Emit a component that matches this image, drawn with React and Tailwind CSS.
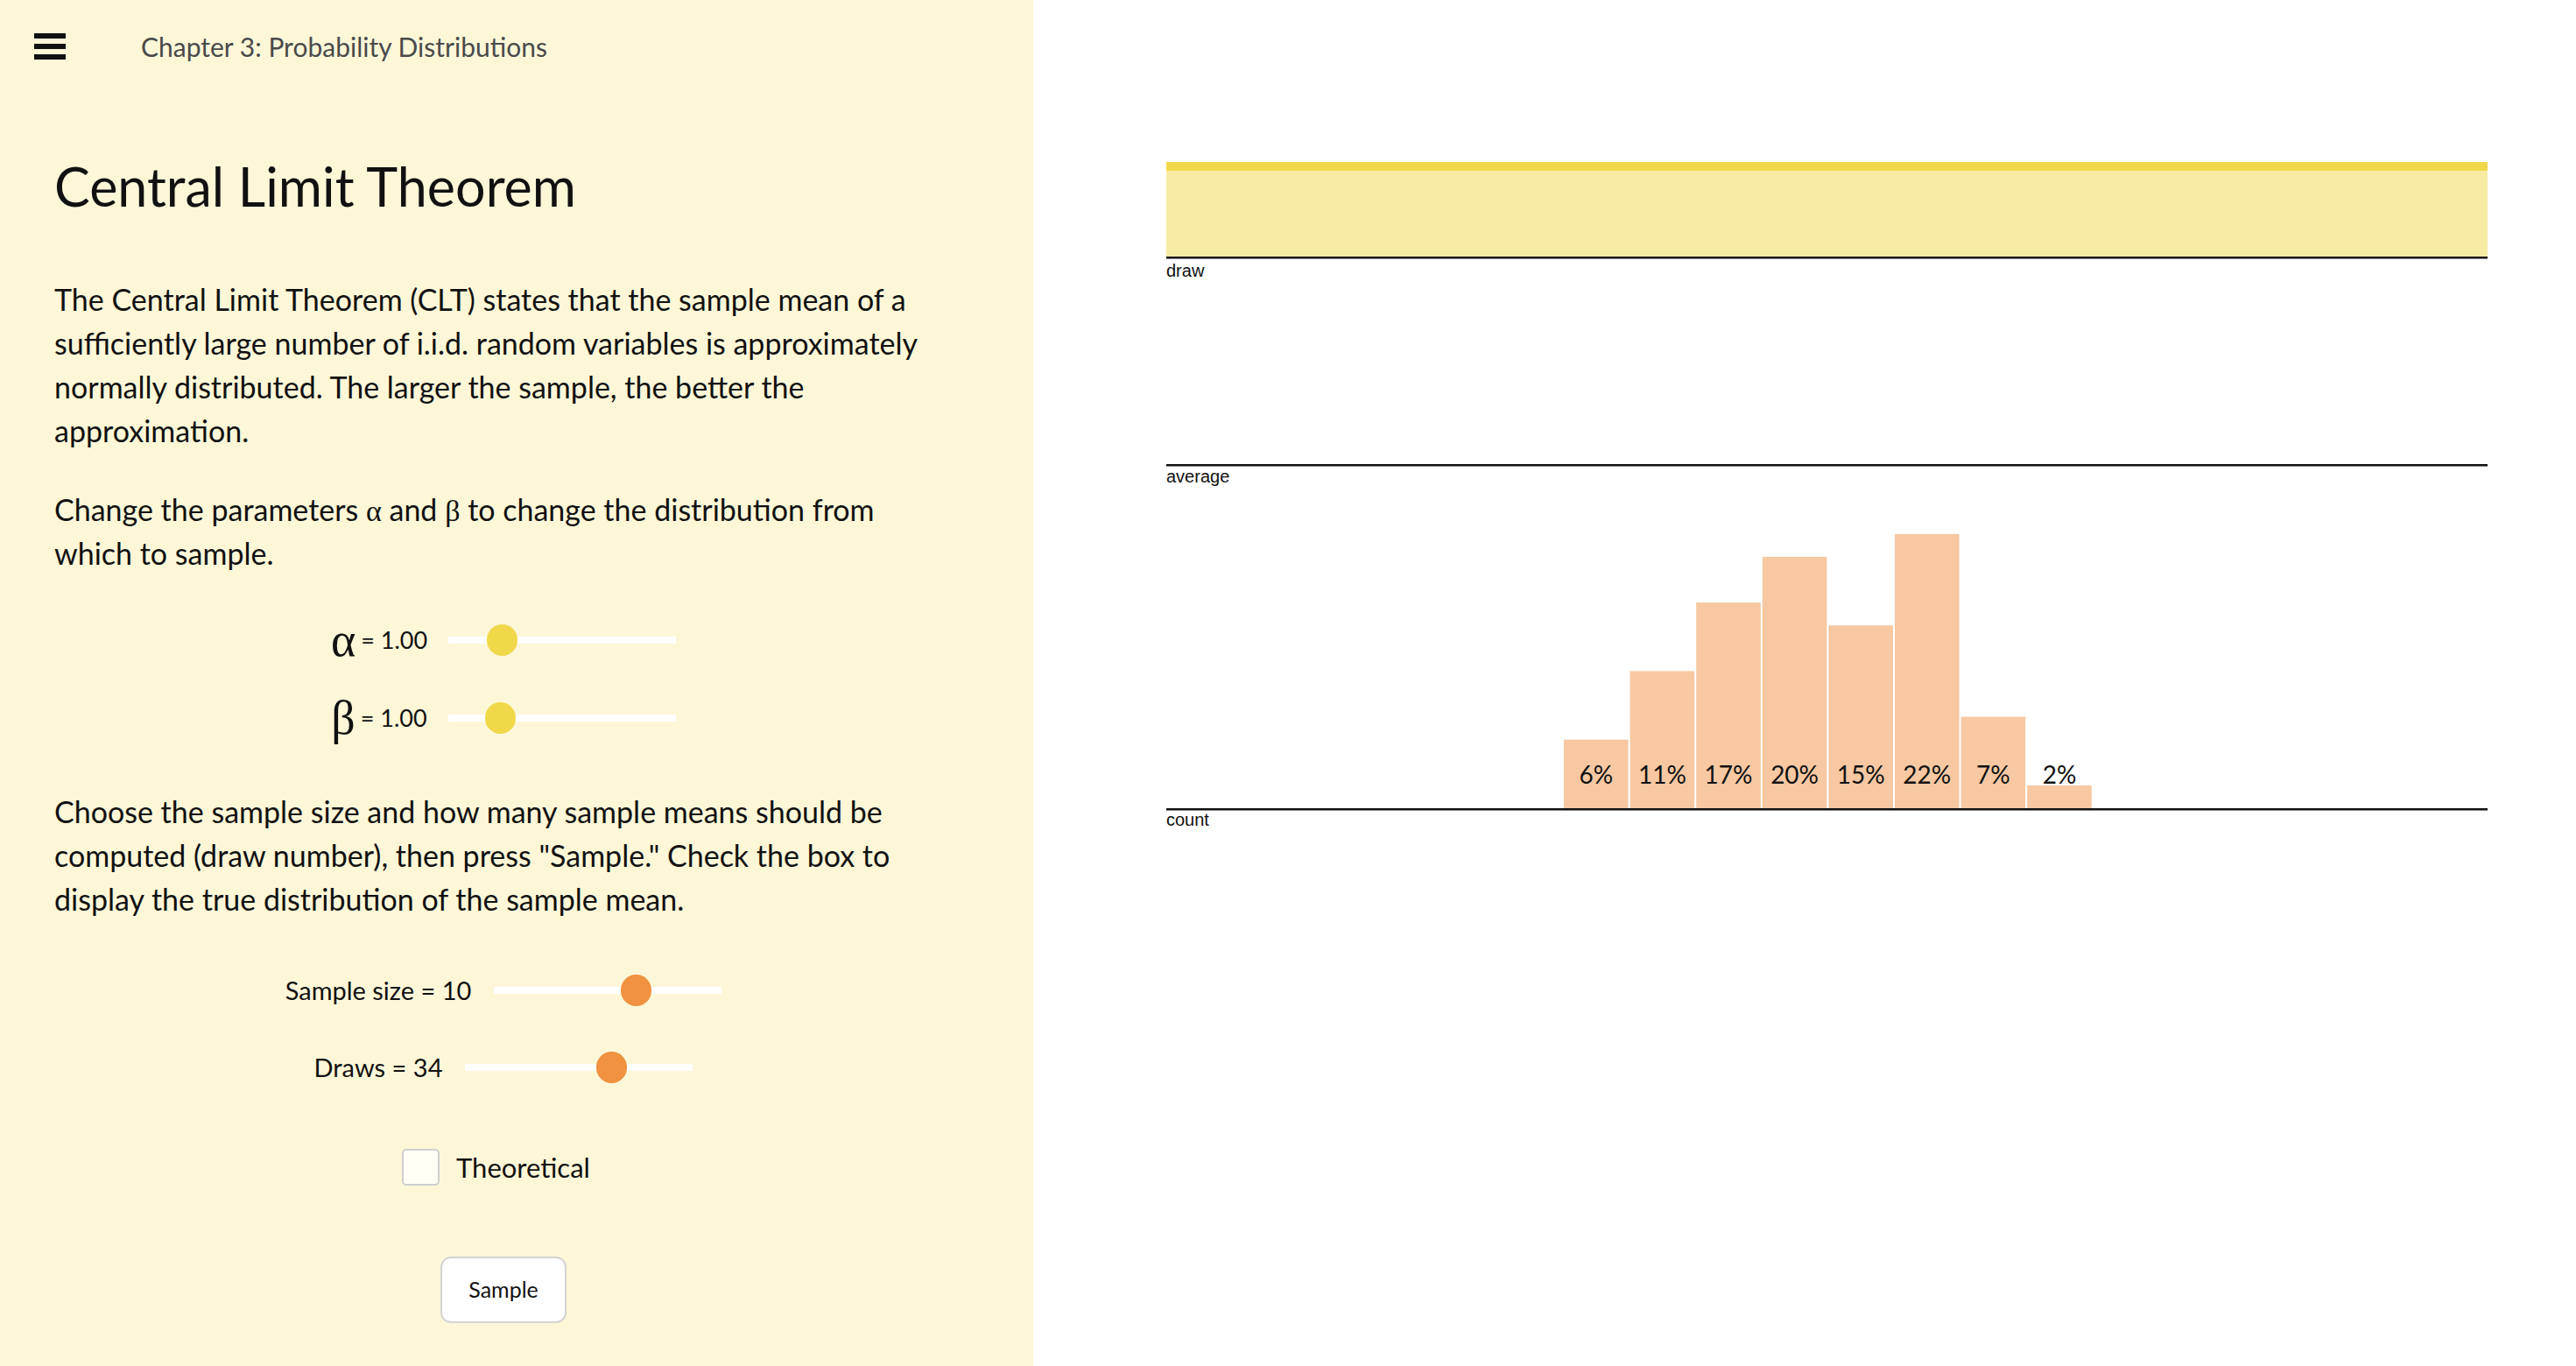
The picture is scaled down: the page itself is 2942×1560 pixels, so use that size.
import React from 'react'

const counts = [3, 6, 9, 11, 8, 12, 4, 1]
const labels = ['6%', '11%', '17%', '20%', '15%', '22%', '7%', '2%']

function Slider({ frac, thumb }) {
  return (
    <div className="relative flex h-[36px] w-[260px] items-center">
      <div className="h-[8px] w-full bg-white" />
      <div
        className={`absolute top-0 h-[36px] w-[35px] rounded-full ${thumb}`}
        style={{ left: frac * 260 - 17.5 }}
      />
    </div>
  )
}

function Chart() {
  const base = 763
  return (
    <svg width="1512" height="800" viewBox="0 0 1512 800" className="block">
      <rect x="0" y="25" width="1509" height="10" fill="#efd94a" />
      <rect x="0" y="35" width="1509" height="98" fill="#f7eba4" />
      <rect x="0" y="133" width="1509" height="2.5" fill="#111" />
      <text x="0" y="156" fontSize="20" fontFamily="Liberation Sans, Arial, sans-serif" fill="#111">draw</text>

      <rect x="0" y="370" width="1509" height="2.5" fill="#111" />
      <text x="0" y="391" fontSize="20" fontFamily="Liberation Sans, Arial, sans-serif" fill="#111">average</text>

      {counts.map((c, i) => {
        const x = 454 + i * 75.6
        return (
          <g key={i}>
            <rect x={x} y={base - c * 26.1} width="73.6" height={c * 26.1} fill="#f7c8a1" />
            <text
              x={x + 36.8}
              y="735"
              textAnchor="middle"
              fontSize="28"
              fontFamily="Lato, sans-serif"
              fill="#111"
            >
              {labels[i]}
            </text>
          </g>
        )
      })}

      <rect x="0" y={base} width="1509" height="2.5" fill="#111" />
      <text x="0" y="783" fontSize="20" fontFamily="Liberation Sans, Arial, sans-serif" fill="#111">count</text>
    </svg>
  )
}

export default function App() {
  return (
    <div className="flex h-[1560px] w-full font-[Lato,sans-serif] text-[#111]">
      {/* left: text + controls */}
      <div className="h-full w-[1180px] shrink-0 bg-[#fdf7d8]">
        <div className="flex h-[106px] items-center pl-[39px]">
          <div className="flex w-[36px] flex-col gap-[6px]">
            <div className="h-[6px] bg-[#111]" />
            <div className="h-[6px] bg-[#111]" />
            <div className="h-[6px] bg-[#111]" />
          </div>
          <span className="ml-[86px] text-[30px] text-[#4a4a4a]">Chapter 3: Probability Distributions</span>
        </div>

        <div className="pl-[62px] pr-[92px]">
          <h1 className="mt-[66px] text-[61px] leading-[81px] font-normal">Central Limit Theorem</h1>

          <p className="mt-[64px] max-w-[1010px] text-[34px] leading-[50px]">
            The Central Limit Theorem (CLT) states that the sample mean of a sufficiently large number of
            i.i.d. random variables is approximately normally distributed. The larger the sample, the better
            the approximation.
          </p>

          <p className="mt-[40px] max-w-[1010px] text-[34px] leading-[50px]">
            Change the parameters <span className="font-['Liberation_Serif',serif] leading-none">α</span> and{' '}
            <span className="font-['Liberation_Serif',serif] leading-none">β</span> to change the distribution
            from which to sample.
          </p>

          <div className="mt-[44px] flex h-[60px] items-center justify-center">
            <span className="font-['Liberation_Serif',serif] text-[54px] leading-none">α</span>
            <span className="ml-[6px] text-[27px]">= 1.00</span>
            <div className="ml-[24px]">
              <Slider frac={0.238} thumb="bg-[#f0d84a]" />
            </div>
          </div>
          <div className="mt-[29px] flex h-[60px] items-center justify-center">
            <span className="font-['Liberation_Serif',serif] text-[54px] leading-none">β</span>
            <span className="ml-[6px] text-[27px]">= 1.00</span>
            <div className="ml-[24px]">
              <Slider frac={0.23} thumb="bg-[#f0d84a]" />
            </div>
          </div>

          <p className="mt-[52px] max-w-[1010px] text-[34px] leading-[50px]">
            Choose the sample size and how many sample means should be computed (draw number), then press
            "Sample." Check the box to display the true distribution of the sample mean.
          </p>

          <div className="mt-[49px] flex h-[60px] items-center justify-center gap-[26px]">
            <span className="text-[29px]">Sample size = 10</span>
            <Slider frac={0.624} thumb="bg-[#f0923f]" />
          </div>
          <div className="mt-[28px] flex h-[60px] items-center justify-center gap-[26px]">
            <span className="text-[29px]">Draws = 34</span>
            <Slider frac={0.642} thumb="bg-[#f0923f]" />
          </div>

          <div className="mt-[54px] flex h-[60px] items-center justify-center pr-[17px]">
            <div className="h-[42px] w-[43px] rounded-[5px] border-2 border-[#cfcfcf] bg-[#fffff6]" />
            <span className="ml-[19px] text-[31px]">Theoretical</span>
          </div>

          <div className="mt-[72px] flex justify-center">
            <button className="h-[76px] w-[144px] rounded-[12px] border-2 border-[#d4d4d4] bg-white text-[25px] text-[#111]">
              Sample
            </button>
          </div>
        </div>
      </div>

      {/* right: chart */}
      <div className="flex-1 bg-white pl-[152px] pt-[160px]">
        <Chart />
      </div>
    </div>
  )
}
